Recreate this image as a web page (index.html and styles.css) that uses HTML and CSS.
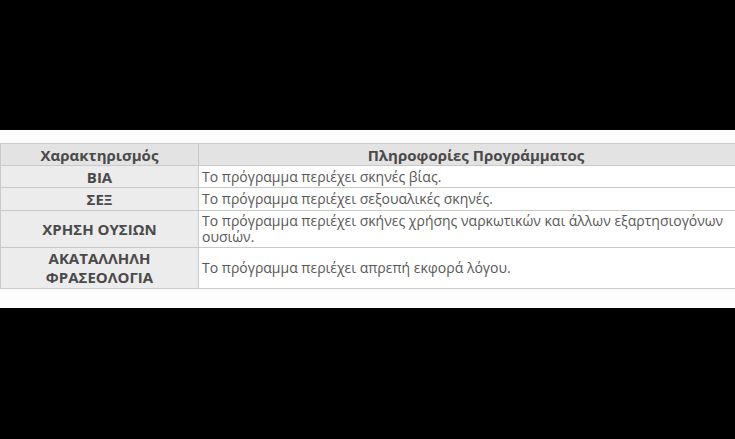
FILE: index.html
```html
<!DOCTYPE html>
<html>
<head>
<meta charset="utf-8">
<link rel="stylesheet" href="styles.css">
</head>
<body>
<div class="band">
  <table class="ratings">
    <tr class="head">
      <th class="c1">Χαρακτηρισμός</th>
      <th class="c2">Πληροφορίες Προγράμματος</th>
    </tr>
    <tr class="r1">
      <td class="lbl">ΒΙΑ</td>
      <td class="txt">Το πρόγραμμα περιέχει σκηνές βίας.</td>
    </tr>
    <tr class="r2">
      <td class="lbl">ΣΕΞ</td>
      <td class="txt">Το πρόγραμμα περιέχει σεξουαλικές σκηνές.</td>
    </tr>
    <tr class="r3">
      <td class="lbl">ΧΡΗΣΗ ΟΥΣΙΩΝ</td>
      <td class="txt">Το πρόγραμμα περιέχει σκήνες χρήσης ναρκωτικών και άλλων εξαρτησιογόνων ουσιών.</td>
    </tr>
    <tr class="r4">
      <td class="lbl">ΑΚΑΤΑΛΛΗΛΗ<br>ΦΡΑΣΕΟΛΟΓΙΑ</td>
      <td class="txt">Το πρόγραμμα περιέχει απρεπή εκφορά λόγου.</td>
    </tr>
  </table>
</div>
</body>
</html>
```
FILE: styles.css
```css
html, body {
  margin: 0;
  padding: 0;
  background: #000;
  width: 735px;
  height: 439px;
  overflow: hidden;
}
.band {
  margin-top: 130px;
  height: 178px;
  background: #fdfdfd;
  padding-top: 13px;
  box-sizing: border-box;
  overflow: hidden;
}
.ratings {
  border-collapse: collapse;
  width: 754px;
  font-family: "Open Sans", "Noto Sans", sans-serif;
  color: #585858;
  table-layout: fixed;
}
.ratings th, .ratings td {
  border: 1px solid #c9c9c9;
  padding: 0 3px;
  line-height: 16px;
  box-sizing: border-box;
}
.c1 { width: 198px; }
.head th {
  background: #e3e3e3;
  height: 22px;
  font-size: 15px;
  font-weight: 700;
  text-align: center;
  color: #4a4a4a;
}
.lbl {
  background: #ececec;
  text-align: center;
  font-weight: 700;
  font-size: 15px;
  color: #4a4a4a;
}
.txt {
  background: #fff;
  font-size: 14px;
  text-align: left;
}
.r1 td { height: 22px; }
.r2 td { height: 23px; }
.r3 td { height: 37px; }
.r4 td { height: 41px; }
.r3 .txt { line-height: 16px; padding-right: 20px; }
.r4 .lbl { line-height: 19px; }
```
